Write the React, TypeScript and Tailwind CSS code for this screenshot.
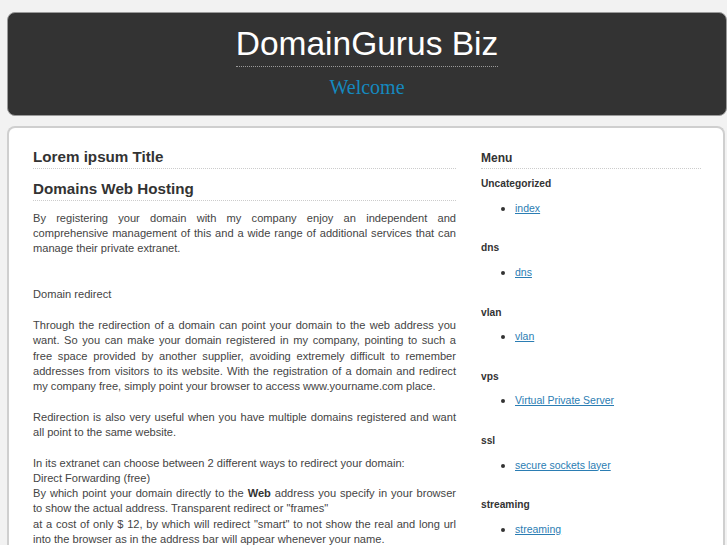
import React from "react";

const groups = [
  { title: "Uncategorized", link: "index" },
  { title: "dns", link: "dns" },
  { title: "vlan", link: "vlan" },
  { title: "vps", link: "Virtual Private Server" },
  { title: "ssl", link: "secure sockets layer" },
  { title: "streaming", link: "streaming" },
];

export default function App() {
  return (
    <div className="min-h-[545px] bg-[#f2f2f2] pl-[7px] pt-[12px] font-['Liberation_Sans',Arial,sans-serif] overflow-hidden">
      <header className="rounded-[8px] border border-[#9a9a9a] bg-[#333333] pt-[12px] pb-[16px] flex flex-col items-center">
        <h1 className="inline-block border-b border-dotted border-[#9a9a9a] pb-[3px] text-[33.5px] leading-[38px] font-normal text-white">
          DomainGurus Biz
        </h1>
        <div className="mt-[8px] font-['Liberation_Serif',serif] text-[20px] leading-[24px] text-[#1589bf]">
          Welcome
        </div>
      </header>

      <main className="mt-[10px] mr-[2px] rounded-t-[8px] border-2 border-b-0 border-[#cfcfcf] bg-white pl-[24px] pt-[20px] min-h-[430px] flex gap-[25px]">
        <section className="w-[423px] shrink-0 text-[#444] text-[11.1px] leading-[15.2px]">
          <h2 className="text-[15.2px] leading-[18px] font-bold text-[#333] pb-[2px] border-b border-dotted border-[#cccccc]">
            Lorem ipsum Title
          </h2>
          <h2 className="mt-[11px] text-[15.2px] leading-[18px] font-bold text-[#333] pb-[2px] border-b border-dotted border-[#cccccc]">
            Domains Web Hosting
          </h2>
          <p className="mt-[10px] mb-[15.6px] text-justify">
            By registering your domain with my company enjoy an independent and comprehensive management of this and a wide range of additional services that can manage their private extranet.
          </p>
          <p className="mb-[15.6px]">
            <br />
            Domain redirect
          </p>
          <p className="mb-[15.6px] text-justify">
            Through the redirection of a domain can point your domain to the web address you want. So you can make your domain registered in my company, pointing to such a free space provided by another supplier, avoiding extremely difficult to remember addresses from visitors to its website. With the registration of a domain and redirect my company free, simply point your browser to access www.yourname.com place.
          </p>
          <p className="mb-[15.6px] text-justify">
            Redirection is also very useful when you have multiple domains registered and want all point to the same website.
          </p>
          <p className="mb-[15.6px] text-justify">
            In its extranet can choose between 2 different ways to redirect your domain:
            <br />
            Direct Forwarding (free)
            <br />
            By which point your domain directly to the <b className="text-[#333]">Web</b> address you specify in your browser to show the actual address. Transparent redirect or "frames"
            <br />
            at a cost of only $ 12, by which will redirect "smart" to not show the real and long url into the browser as in the address bar will appear whenever your name.
          </p>
        </section>

        <aside className="w-[220px] shrink-0 text-[#333]">
          <h2 className="mt-[2px] text-[12px] leading-[16px] font-bold pb-[2px] border-b border-dotted border-[#cccccc]">
            Menu
          </h2>
          <div className="mt-[8px]">
            {groups.map((g) => (
              <div key={g.title} className="mb-[26.8px]">
                <h3 className="text-[10.2px] leading-[14px] font-bold text-[#333]">{g.title}</h3>
                <ul className="mt-[9.5px] list-disc pl-[34px] text-[10.5px] leading-[14px] text-[#333] marker:text-[12px]">
                  <li>
                    <a href="#" className="text-[#2b7db3] underline">
                      {g.link}
                    </a>
                  </li>
                </ul>
              </div>
            ))}
          </div>
        </aside>
      </main>
    </div>
  );
}
